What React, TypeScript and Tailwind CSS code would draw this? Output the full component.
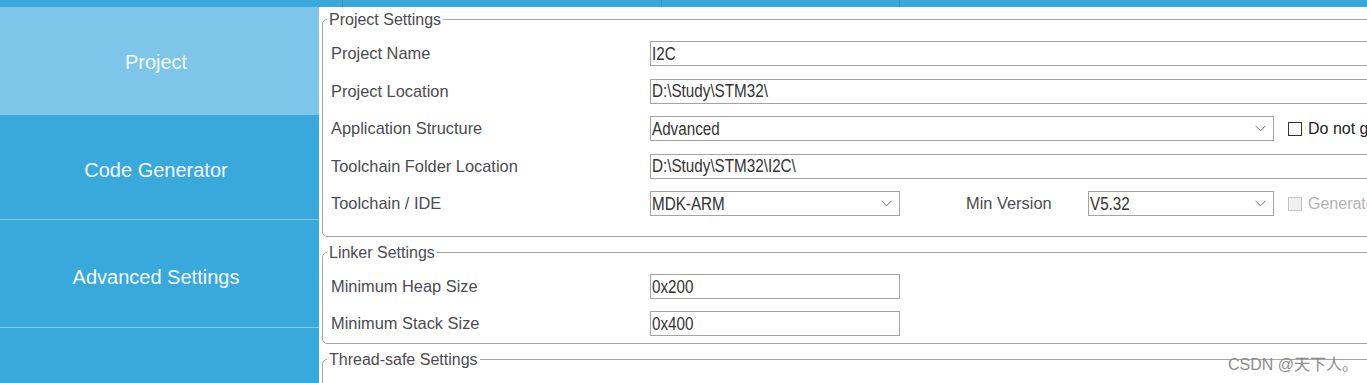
import React from "react";

const Chevron: React.FC<{ muted?: boolean }> = ({ muted }) => (
  <svg width="11" height="7" viewBox="0 0 11 7" className="shrink-0">
    <polyline points="0.5,0.8 5.5,5.8 10.5,0.8" fill="none" stroke={muted ? "#9a9a9a" : "#6e6e6e"} strokeWidth="1" />
  </svg>
);

// text in the boxes is a narrow face, squeeze it a bit
const BoxText: React.FC<{ children: React.ReactNode }> = ({ children }) => (
  <span className="inline-block origin-left scale-x-[0.87] whitespace-nowrap text-[17.5px] leading-[22px] text-[#333333]">
    {children}
  </span>
);

const TextBox: React.FC<{ value: string; className?: string }> = ({ value, className = "" }) => (
  <div className={`flex h-[25px] items-center overflow-hidden border border-[#a3a3a3] bg-white pl-[1px] ${className}`}>
    <BoxText>{value}</BoxText>
  </div>
);

const Select: React.FC<{ value: string; className?: string }> = ({ value, className = "" }) => (
  <div className={`flex h-[25px] items-center justify-between overflow-hidden border border-[#a3a3a3] bg-white pl-[1px] pr-[7px] ${className}`}>
    <BoxText>{value}</BoxText>
    <Chevron />
  </div>
);

const Check: React.FC<{ label: string; disabled?: boolean }> = ({ label, disabled }) => (
  <div className="ml-[14px] flex shrink-0 items-center gap-[6px]">
    <div
      className={`h-[14px] w-[14px] border ${disabled ? "border-[#c4c4c4] bg-[#f0f0f0]" : "border-[#333333] bg-white"}`}
    />
    <span className={`whitespace-nowrap text-[16px] ${disabled ? "text-[#b3b3b3]" : "text-[#222222]"}`}>{label}</span>
  </div>
);

const Row: React.FC<{ label: string; children: React.ReactNode }> = ({ label, children }) => (
  <div className="flex h-[25px] items-center">
    <div className="w-[319px] shrink-0 whitespace-nowrap text-[16.4px] text-[#4b4b50]">{label}</div>
    {children}
  </div>
);

const Group: React.FC<{ title: string; className?: string; children?: React.ReactNode }> = ({
  title,
  className = "",
  children,
}) => (
  <fieldset className={`w-[1150px] rounded-[5px] border border-[#a6a6a6] ${className}`}>
    <legend className="ml-[4px] px-[2px] text-[16px] leading-[19px] text-[#4b4b50]">{title}</legend>
    {children}
  </fieldset>
);

const navItems = [
  { name: "Project", h: "h-[108px]", active: true },
  { name: "Code Generator", h: "h-[105px]", active: false },
  { name: "Advanced Settings", h: "h-[108px]", active: false },
];

export default function App() {
  return (
    <div className="relative flex h-[383px] w-[1367px] flex-col overflow-hidden bg-white font-['Liberation_Sans',Arial,sans-serif]">
      {/* top strip */}
      <div className="flex h-[7px] shrink-0 bg-[#39a8db]">
        <div className="w-[343px] border-r border-[#2f95c6]" />
        <div className="w-[319px] border-r border-[#2f95c6]" />
        <div className="w-[238px] border-r border-[#2f95c6]" />
        <div className="flex-1" />
      </div>

      <div className="flex min-h-0 flex-1">
        {/* sidebar */}
        <div className="flex w-[319px] shrink-0 flex-col bg-[#39a8db]">
          {navItems.map((item) => (
            <div
              key={item.name}
              className={`flex ${item.h} items-center justify-center pr-[7px] text-[20px] text-[#f4fafd] ${
                item.active ? "bg-[#7dc5e9] pt-[2px]" : "border-b border-[#86cbee] pt-[6px]"
              }`}
            >
              {item.name}
            </div>
          ))}
        </div>

        {/* settings */}
        <div className="min-w-0 flex-1 overflow-hidden pl-[3px] pt-[3px]">
          <Group title="Project Settings">
            <div className="flex flex-col gap-[12.5px] pb-[20px] pl-[8px] pr-[12px] pt-[12px]">
              <Row label="Project Name">
                <TextBox value="I2C" className="flex-1" />
              </Row>
              <Row label="Project Location">
                <TextBox value="D:\Study\STM32\" className="flex-1" />
              </Row>
              <Row label="Application Structure">
                <Select value="Advanced" className="w-[624px] shrink-0" />
                <Check label="Do not generate the main()" />
              </Row>
              <Row label="Toolchain Folder Location">
                <TextBox value="D:\Study\STM32\I2C\" className="flex-1" />
              </Row>
              <Row label="Toolchain / IDE">
                <Select value="MDK-ARM" className="w-[250px] shrink-0" />
                <div className="ml-[66px] w-[122px] shrink-0 whitespace-nowrap text-[16.4px] text-[#4b4b50]">Min Version</div>
                <Select value="V5.32" className="w-[186px] shrink-0" />
                <Check label="Generate Under Root" disabled />
              </Row>
            </div>
          </Group>

          <Group title="Linker Settings" className="mt-[6px]">
            <div className="flex flex-col gap-[12px] pb-[7px] pl-[8px] pr-[12px] pt-[12px]">
              <Row label="Minimum Heap Size">
                <TextBox value="0x200" className="w-[250px]" />
              </Row>
              <Row label="Minimum Stack Size">
                <TextBox value="0x400" className="w-[250px]" />
              </Row>
            </div>
          </Group>

          <Group title="Thread-safe Settings" className="mt-[6px] h-[60px]" />
        </div>
      </div>

      {/* watermark */}
      <div className="absolute bottom-[6px] right-[9px] font-['Liberation_Sans','Noto_Sans_CJK_SC',sans-serif] text-[16px] text-[#8c8c8c]">
        CSDN @天下人。
      </div>
    </div>
  );
}
